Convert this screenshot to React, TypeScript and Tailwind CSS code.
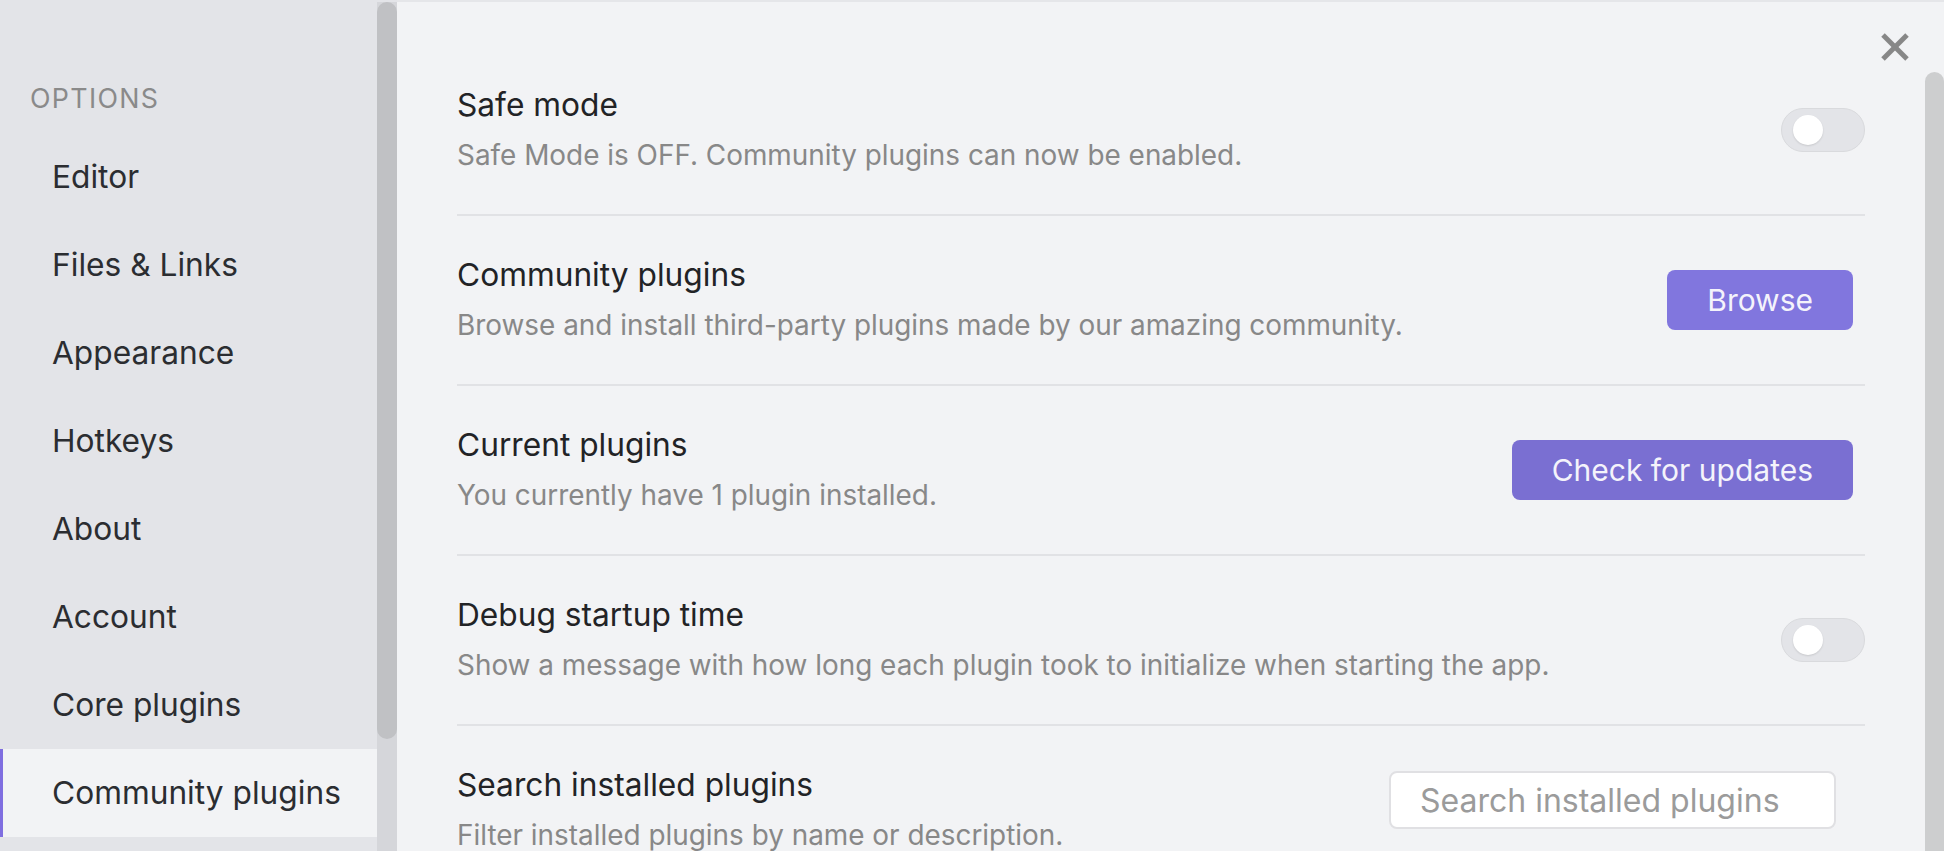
import React from "react";

const navItems = [
  "Editor",
  "Files & Links",
  "Appearance",
  "Hotkeys",
  "About",
  "Account",
  "Core plugins",
  "Community plugins",
];

function Toggle() {
  return (
    <div className="relative h-[44px] w-[84px] shrink-0 rounded-full border border-[#d9dadd] bg-[#e3e4e8]">
      <div className="absolute left-[11px] top-[6px] h-[30px] w-[30px] rounded-full bg-white shadow-[0_1px_2px_rgba(0,0,0,0.12)]" />
    </div>
  );
}

function Row({
  title,
  desc,
  control,
  last,
}: {
  title: string;
  desc: string;
  control: React.ReactNode;
  last?: boolean;
}) {
  return (
    <div
      className={
        "flex h-[170px] shrink-0 items-center justify-between " +
        (last ? "pb-[2px]" : "border-b-2 border-[#e1e2e5]")
      }
    >
      <div className="flex flex-col">
        <div className="text-[31.7px] leading-[40px] text-[#222326]">{title}</div>
        <div className="mt-[10px] text-[27.9px] leading-[40px] text-[#888888]">{desc}</div>
      </div>
      {control}
    </div>
  );
}

function PurpleButton({ label, dark }: { label: string; dark?: boolean }) {
  return (
    <button
      className={
        "mr-[12px] h-[60px] shrink-0 rounded-[8px] px-[40px] text-[30px] text-[#f4f3fb] " +
        (dark ? "bg-[#7a6fd2]" : "bg-[#8176de]")
      }
    >
      {label}
    </button>
  );
}

export default function App() {
  return (
    <div
      className="flex h-[851px] w-[1944px] overflow-hidden bg-[#f2f3f5]"
      style={{ fontFamily: "Inter, 'Noto Sans', sans-serif" }}
    >
      {/* Sidebar */}
      <div className="flex w-[377px] shrink-0 flex-col bg-[#e3e4e8] pt-[78px]">
        <div className="h-[55px] pl-[30px] text-[26.8px] leading-[40px] tracking-[0.05em] text-[#8a8a8a]">
          OPTIONS
        </div>
        {navItems.map((item) => {
          const active = item === "Community plugins";
          return (
            <div
              key={item}
              className={
                "flex h-[88px] shrink-0 items-center pl-[52px] text-[31.7px] text-[#2b2d31] " +
                (active ? "bg-[#f2f3f5] shadow-[inset_3px_0_0_0_#7f6ee0]" : "")
              }
            >
              {item}
            </div>
          );
        })}
      </div>
      {/* Sidebar scrollbar */}
      <div className="flex w-[20px] shrink-0 flex-col bg-[#d5d6da]">
        <div className="h-[2px] bg-[#e3e4e8]" />
        <div className="h-[737px] rounded-[10px] bg-[#c0c1c4]" />
      </div>
      {/* Main */}
      <div className="relative flex flex-1 border-t-2 border-[#e5e6e9]">
        <div className="flex flex-1 flex-col pl-[60px] pr-[60px] pt-[44px]">
          <Row
            title="Safe mode"
            desc="Safe Mode is OFF. Community plugins can now be enabled."
            control={<Toggle />}
          />
          <Row
            title="Community plugins"
            desc="Browse and install third-party plugins made by our amazing community."
            control={<PurpleButton label="Browse" />}
          />
          <Row
            title="Current plugins"
            desc="You currently have 1 plugin installed."
            control={<PurpleButton label="Check for updates" dark />}
          />
          <Row
            title="Debug startup time"
            desc="Show a message with how long each plugin took to initialize when starting the app."
            control={<Toggle />}
          />
          <Row
            title="Search installed plugins"
            desc="Filter installed plugins by name or description."
            last
            control={
              <input
                placeholder="Search installed plugins"
                className="mr-[29px] mt-[45px] h-[58px] w-[447px] shrink-0 self-start rounded-[8px] border-2 border-[#e0e0e3] bg-white pl-[29px] text-[32px] text-[#222] outline-none placeholder:text-[#9b9b9b]"
              />
            }
          />
        </div>
        {/* Right scrollbar */}
        <div className="flex w-[19px] shrink-0 flex-col pt-[70px]">
          <div className="flex-1 rounded-t-[10px] bg-[#cdcecf]" />
        </div>
        {/* Close button */}
        <button className="absolute left-[1484px] top-[31px] h-[28px] w-[28px]">
          <svg width="28" height="28" viewBox="0 0 28 28">
            <line x1="2" y1="2" x2="26" y2="26" stroke="#878787" strokeWidth="5" />
            <line x1="26" y1="2" x2="2" y2="26" stroke="#878787" strokeWidth="5" />
          </svg>
        </button>
      </div>
    </div>
  );
}
